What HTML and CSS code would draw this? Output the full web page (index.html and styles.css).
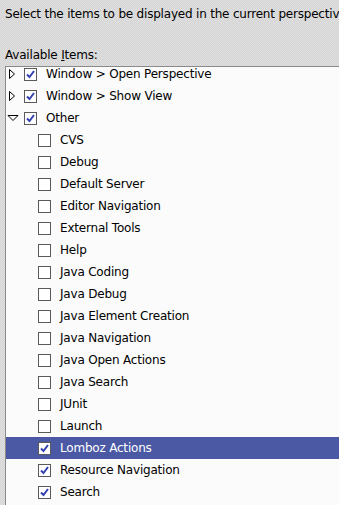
FILE: index.html
```html
<!DOCTYPE html>
<html lang="en">
<head>
    <meta charset="UTF-8">
    <title>Customize Perspective</title>
    <link rel="stylesheet" href="styles.css">
</head>
<body>
    <div class="page">
        <p class="prompt">Select the items to be displayed in the current perspective.</p>
        <p class="label">Available <u>I</u>tems:</p>
        <div class="tree">
            <div class="rows">
                <div class="row">
                    <svg class="twisty" width="12" height="12" viewBox="0 0 12 12"><path d="M2.5 1.5 L7.5 6 L2.5 10.5 Z" fill="none" stroke="#000"/></svg>
                    <span class="box checked"><svg width="11" height="11" viewBox="0 0 11 11"><path d="M2 5.5 L4.5 8 L9 2" fill="none" stroke="#3240b0" stroke-width="2"/></svg></span>
                    <span class="text">Window &gt; Open Perspective</span>
                </div>
                <div class="row">
                    <svg class="twisty" width="12" height="12" viewBox="0 0 12 12"><path d="M2.5 1.5 L7.5 6 L2.5 10.5 Z" fill="none" stroke="#000"/></svg>
                    <span class="box checked"><svg width="11" height="11" viewBox="0 0 11 11"><path d="M2 5.5 L4.5 8 L9 2" fill="none" stroke="#3240b0" stroke-width="2"/></svg></span>
                    <span class="text">Window &gt; Show View</span>
                </div>
                <div class="row">
                    <svg class="twisty" width="12" height="12" viewBox="0 0 12 12"><path d="M1 3.5 L11 3.5 L6 8.5 Z" fill="none" stroke="#000"/></svg>
                    <span class="box checked"><svg width="11" height="11" viewBox="0 0 11 11"><path d="M2 5.5 L4.5 8 L9 2" fill="none" stroke="#3240b0" stroke-width="2"/></svg></span>
                    <span class="text">Other</span>
                </div>
                <div class="row child"><span class="box"></span><span class="text">CVS</span></div>
                <div class="row child"><span class="box"></span><span class="text">Debug</span></div>
                <div class="row child"><span class="box"></span><span class="text">Default Server</span></div>
                <div class="row child"><span class="box"></span><span class="text">Editor Navigation</span></div>
                <div class="row child"><span class="box"></span><span class="text">External Tools</span></div>
                <div class="row child"><span class="box"></span><span class="text">Help</span></div>
                <div class="row child"><span class="box"></span><span class="text">Java Coding</span></div>
                <div class="row child"><span class="box"></span><span class="text">Java Debug</span></div>
                <div class="row child"><span class="box"></span><span class="text">Java Element Creation</span></div>
                <div class="row child"><span class="box"></span><span class="text">Java Navigation</span></div>
                <div class="row child"><span class="box"></span><span class="text">Java Open Actions</span></div>
                <div class="row child"><span class="box"></span><span class="text">Java Search</span></div>
                <div class="row child"><span class="box"></span><span class="text">JUnit</span></div>
                <div class="row child"><span class="box"></span><span class="text">Launch</span></div>
                <div class="row child selected">
                    <span class="box checked"><svg width="11" height="11" viewBox="0 0 11 11"><path d="M2 5.5 L4.5 8 L9 2" fill="none" stroke="#3240b0" stroke-width="2"/></svg></span>
                    <span class="text">Lomboz Actions</span>
                </div>
                <div class="row child">
                    <span class="box checked"><svg width="11" height="11" viewBox="0 0 11 11"><path d="M2 5.5 L4.5 8 L9 2" fill="none" stroke="#3240b0" stroke-width="2"/></svg></span>
                    <span class="text">Resource Navigation</span>
                </div>
                <div class="row child">
                    <span class="box checked"><svg width="11" height="11" viewBox="0 0 11 11"><path d="M2 5.5 L4.5 8 L9 2" fill="none" stroke="#3240b0" stroke-width="2"/></svg></span>
                    <span class="text">Search</span>
                </div>
            </div>
        </div>
    </div>
</body>
</html>
```

FILE: styles.css
```css
html, body {
    margin: 0;
    height: 100%;
    overflow: hidden;
}
body {
    font-family: "DejaVu Sans", sans-serif;
    font-size: 12px;
    letter-spacing: -0.2px;
    color: #000;
    background-color: #dadada;
    background-image: repeating-conic-gradient(#d4d4d4 0 25%, #e0e0e0 0 50%);
    background-size: 2px 2px;
}
.page {
    display: flex;
    flex-direction: column;
    height: 100%;
}
.prompt {
    margin: 0;
    padding: 7px 0 0 5px;
    white-space: nowrap;
}
.label {
    margin: 0;
    padding: 27px 0 0 5px;
}
.tree {
    flex: 1;
    margin: 4px 0 0 5px;
    border-top: 1px solid #8a8a8a;
    border-left: 1px solid #8a8a8a;
    background: #fbfbfb;
    overflow: hidden;
}
.rows {
    margin-top: -4px;
}
.row {
    display: flex;
    align-items: center;
    height: 22px;
    padding-left: 1px;
    white-space: nowrap;
}
.row.child {
    padding-left: 32px;
}
.twisty {
    flex: none;
    margin-right: 5px;
}
.box {
    flex: none;
    box-sizing: border-box;
    width: 13px;
    height: 13px;
    border: 1px solid #5a5a5a;
    background: #fff;
    display: flex;
    align-items: center;
    justify-content: center;
}
.text {
    margin-left: 9px;
}
.selected {
    background: #4b59a5;
    color: #fff;
}
```
